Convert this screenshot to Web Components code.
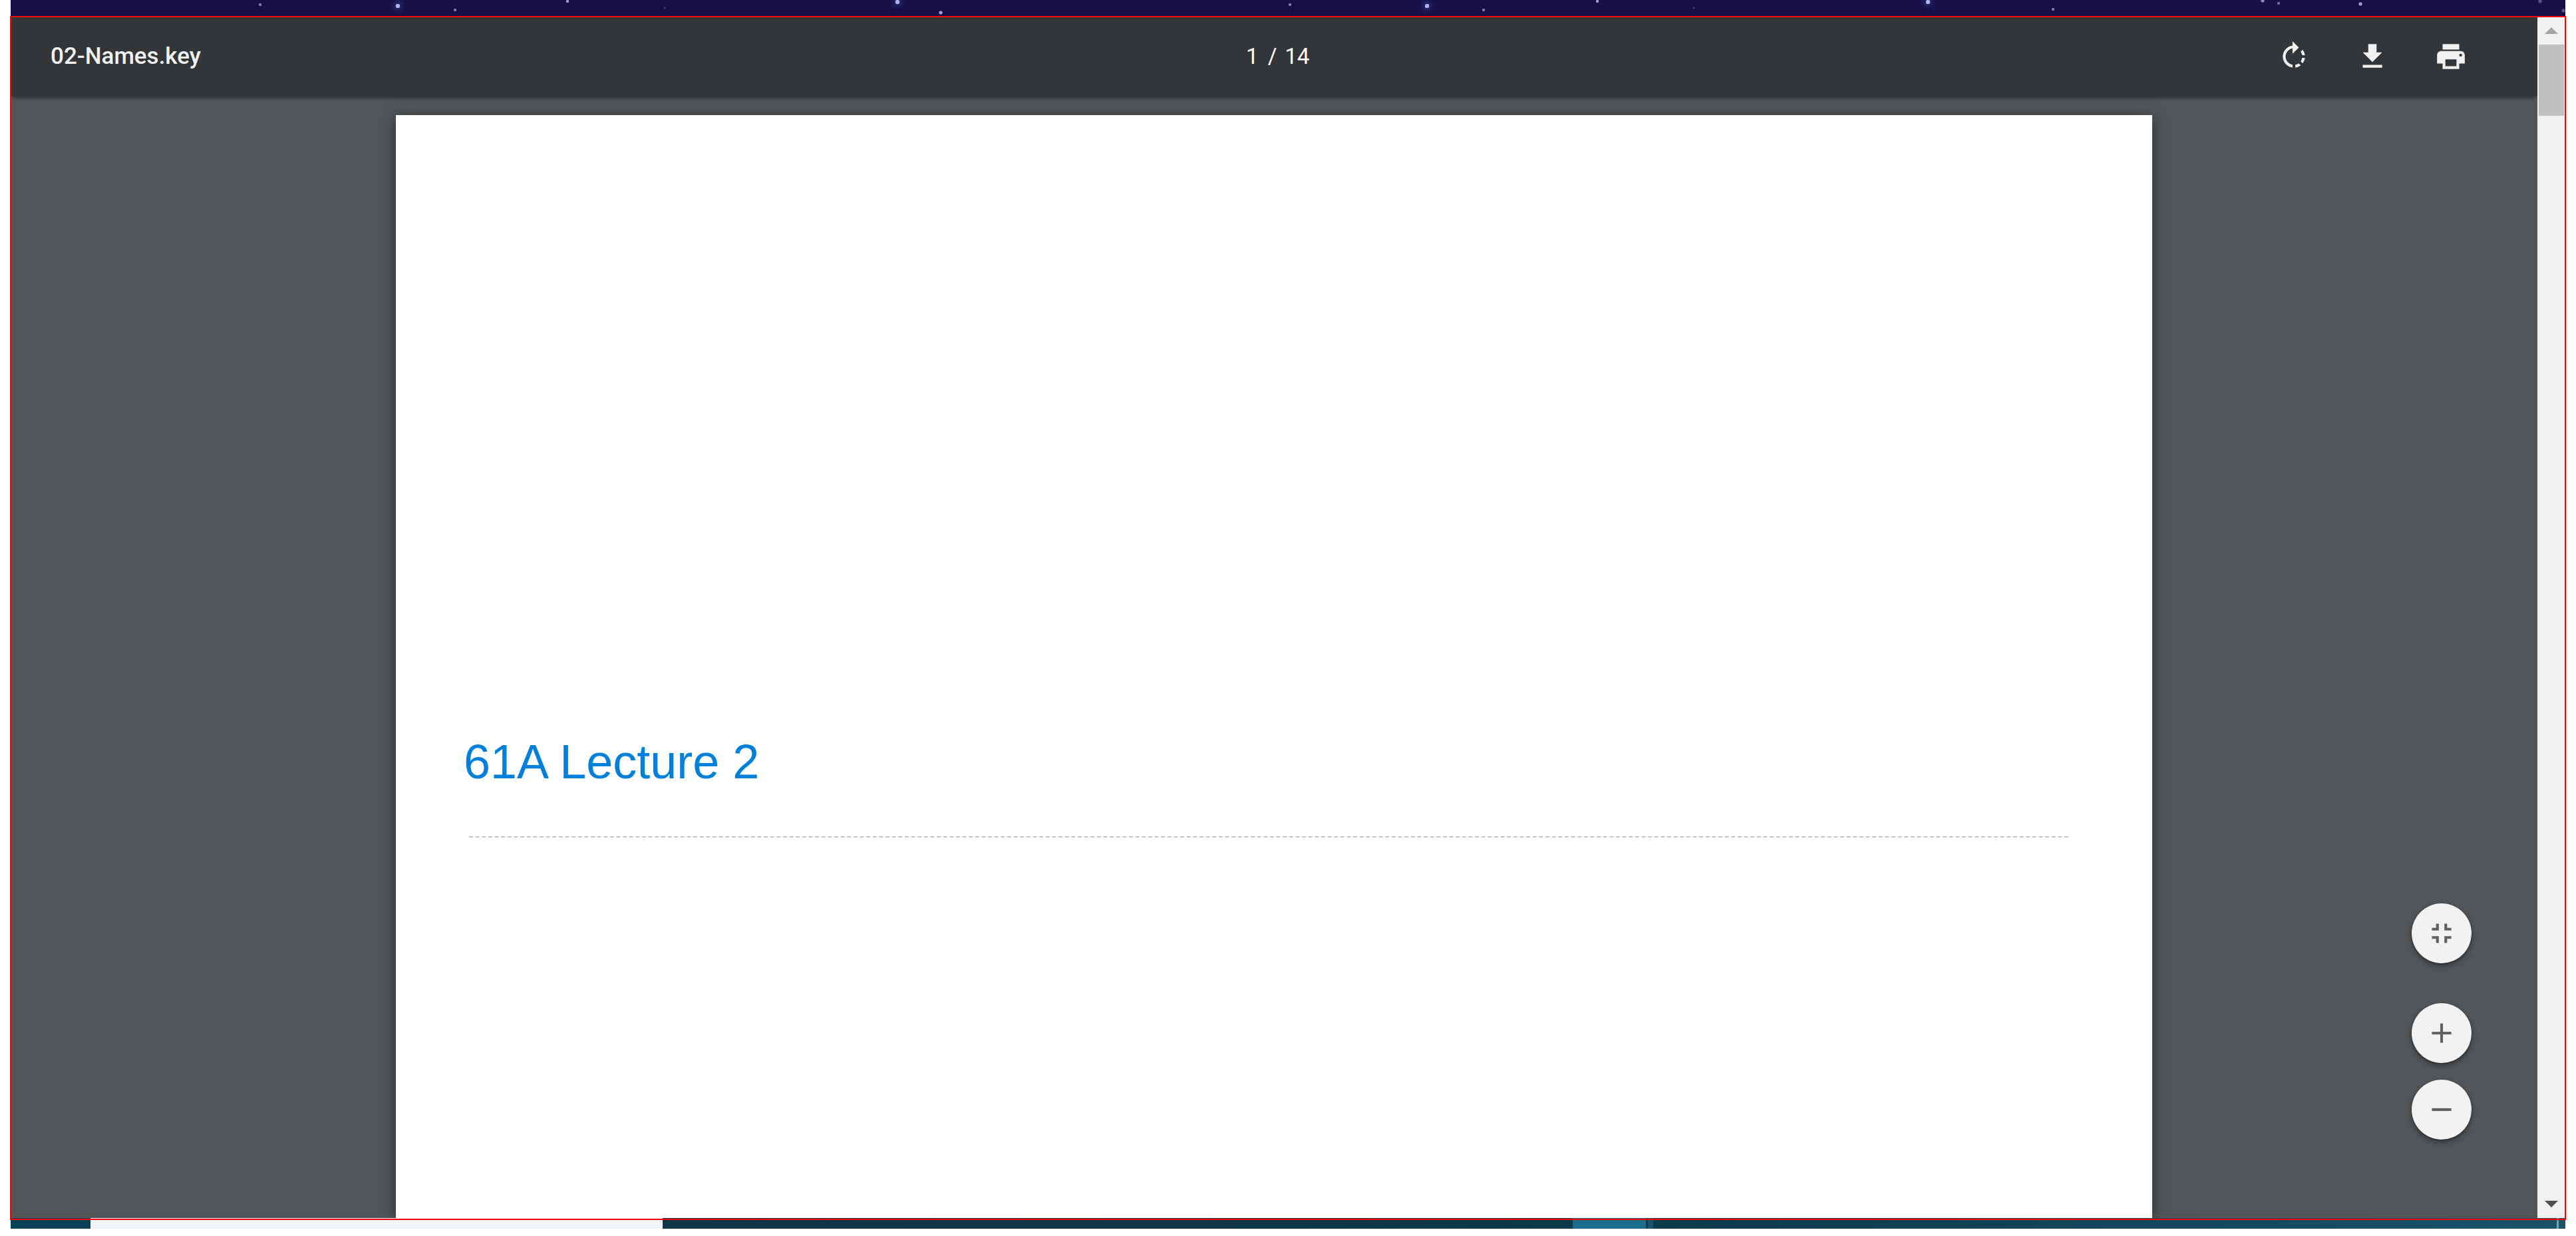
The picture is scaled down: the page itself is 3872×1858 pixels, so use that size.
<!DOCTYPE html>
<html lang="en">
<head>
<meta charset="utf-8">
<title>02-Names.key</title>
<style>
  html, body { margin: 0; height: 100%; background: #fff; }
  body { font-family: Roboto, sans-serif; }
</style>
</head>
<body>
<pdf-desktop>
  <pdf-viewer>
    <pdf-toolbar slot="toolbar" page="1" pages="14">02-Names.key</pdf-toolbar>
    <pdf-sheet>61A Lecture 2</pdf-sheet>
    <zoom-controls slot="zoom"></zoom-controls>
    <scroll-track slot="scroll"></scroll-track>
  </pdf-viewer>
</pdf-desktop>

<script>
const define = (name, html) => customElements.define(name, class extends HTMLElement {
  constructor() {
    super();
    this.attachShadow({ mode: 'open' }).innerHTML = typeof html === 'function' ? html(this) : html;
  }
});

const ICONS = {
  rotate: 'M15.55 5.55L11 1v3.07C7.06 4.56 4 7.92 4 12s3.05 7.44 7 7.93v-2.02c-2.84-.48-5-2.94-5-5.91s2.16-5.43 5-5.91V10l4.55-4.45zM19.93 11c-.17-1.39-.72-2.73-1.62-3.89l-1.42 1.42c.54.75.88 1.6 1.02 2.47h2.02zM13 17.9v2.02c1.39-.17 2.74-.71 3.9-1.61l-1.44-1.44c-.75.54-1.59.89-2.46 1.03zm3.89-2.42l1.42 1.41c.9-1.16 1.45-2.5 1.62-3.89h-2.02c-.14.87-.48 1.72-1.02 2.48z',
  download: 'M19 9h-4V3H9v6H5l7 7 7-7zM5 18v2h14v-2H5z',
  print: 'M19 8H5c-1.66 0-3 1.34-3 3v6h4v4h12v-4h4v-6c0-1.66-1.34-3-3-3zm-3 11H8v-5h8v5zm3-7c-.55 0-1-.45-1-1s.45-1 1-1 1 .45 1 1-.45 1-1 1zm-1-9H6v4h12V3z',
  fit: 'M5 16h3v3h2v-5H5v2zm3-8H5v2h5V5H8v3zm6 11h2v-3h3v-2h-5v5zm2-11V5h-2v5h5V8h-3z',
  plus: 'M19 13h-6v6h-2v-6H5v-2h6V5h2v6h6v2z',
  minus: 'M19 13H5v-2h14v2z'
};

// Icon button: flat in the toolbar, round and raised with the "fab" attribute.
define('icon-button', el => `
  <style>
    :host { display: block; }
    button { display: grid; place-items: center; padding: 0; border: 0; background: none; color: #f1f1f1; cursor: pointer; }
    svg { display: block; width: 50px; height: 50px; fill: currentColor; }
    :host([fab]) button { width: 90px; height: 90px; border-radius: 50%; background: #f2f2f2; color: #616161;
      box-shadow: 0 4px 8px rgba(0,0,0,.4), 0 1px 3px rgba(0,0,0,.3); }
  </style>
  <button type="button" aria-label="${el.getAttribute('label')}">
    <svg viewBox="0 0 24 24" aria-hidden="true"><path d="${ICONS[el.getAttribute('icon')]}"/></svg>
  </button>`);

define('night-sky', () => {
  const stars = [[391,7,4,.6],[598,9,6,.9],[684,15,4,.6],[853,2,4,.8],[999,12,3,.25],[1349,3,6,.9],[1414,19,5,.8],[1939,7,4,.6],
    [2145,9,6,.9],[2230,15,4,.6],[2401,2,4,.8],[2546,12,3,.25],[2898,3,6,.9],[3086,14,4,.6],[3401,1,5,.7],[3425,5,4,.5],
    [3548,6,5,.8],[3818,2,5,.4],[3853,16,5,.4]];
  return `
  <style>
    :host { display: block; height: 25px; background: #180f47; }
    svg { display: block; width: 100%; height: 100%; }
  </style>
  <svg aria-hidden="true">
    <defs><radialGradient id="g"><stop offset="0" stop-color="#2c4a9a" stop-opacity=".6"/><stop offset="1" stop-color="#1c2a70" stop-opacity="0"/></radialGradient></defs>
    ${stars.map(([x, y, s, o]) => `${s > 5 ? `<circle cx="${x - 16}" cy="${y}" r="13" fill="url(#g)"/>` : ''}<rect x="${x - 16 - s / 2}" y="${y - s / 2}" width="${s}" height="${s}" rx="${s / 3}" fill="#c4c3ee" opacity="${o}"/>`).join('')}
  </svg>`;
});

define('task-strip', `
  <style>
    :host { display: flex; height: 16px; background: linear-gradient(90deg, #064256, #0f3546 26%, #0c3a4b 65%, #17506a 96%, #1a5267); }
    i { display: block; }
    .lead { width: 120px; }
    .field { width: 860px; background: #f0f4f6; }
    .gap { width: 1368px; }
    .active { width: 110px; background: #1a6d8d; }
    .seam { width: 3px; }
    .next { width: 8px; background: #17566f; }
    .edge { width: 3px; margin: 0 10px 0 auto; background: #7c9fae; }
  </style>
  <i class="lead"></i><i class="field"></i><i class="gap"></i><i class="active"></i><i class="seam"></i><i class="next"></i><i class="edge"></i>`);

define('pdf-toolbar', el => `
  <style>
    :host { display: grid; grid-template-columns: 1fr auto 1fr; align-items: center; height: 120px;
      padding: 0 105px 0 60px; background: #323639; color: #f1f1f1; position: relative; z-index: 1;
      box-shadow: 0 5px 6px -3px rgba(0,0,0,.5); }
    h1 { margin: 0; font-size: 35px; line-height: 40px; font-weight: 500; }
    form { display: flex; align-items: center; margin-left: 45px; font-size: 33px; line-height: 40px; color: #fff; }
    input { width: 30px; height: 40px; padding: 0; border: 0; background: none; color: inherit; font: inherit; text-align: right; outline: 0; }
    .sep { margin: 0 12px 0 14px; }
    nav { display: flex; justify-content: flex-end; gap: 68px; }
  </style>
  <h1><slot></slot></h1>
  <form><input type="text" aria-label="Page number" value="${el.getAttribute('page')}"><span class="sep">/</span><span>${el.getAttribute('pages')}</span></form>
  <nav>
    <icon-button icon="rotate" label="Rotate clockwise"></icon-button>
    <icon-button icon="download" label="Download"></icon-button>
    <icon-button icon="print" label="Print"></icon-button>
  </nav>`);

define('pdf-sheet', `
  <style>
    :host { display: block; flex: 1; box-sizing: border-box; width: 100%; max-width: 2640px; margin: 0 auto; padding: 932px 126px 0 102px;
      background: #fff; box-shadow: 0 4px 20px rgba(0,0,0,.5); }
    h2 { margin: 0; font: 400 72px/80px "Liberation Sans", Arial, sans-serif; color: #0080db; }
    svg { display: block; width: calc(100% - 8px); height: 2px; margin: 72px 0 0 8px; }
  </style>
  <h2><slot></slot></h2>
  <svg aria-hidden="true"><line x1="0" y1="1" x2="100%" y2="1" stroke="#c6c6c6" stroke-width="2" pathLength="1997" stroke-dasharray="5 3"/></svg>`);

define('zoom-controls', `
  <style>
    :host { display: flex; flex-direction: column; gap: 25px; }
    .fit { margin-bottom: 35px; }
  </style>
  <icon-button class="fit" fab icon="fit" label="Fit to page"></icon-button>
  <icon-button fab icon="plus" label="Zoom in"></icon-button>
  <icon-button fab icon="minus" label="Zoom out"></icon-button>`);

define('scroll-track', `
  <style>
    :host { display: flex; flex-direction: column; width: 42px; background: #f1f1f1; }
    button { display: grid; place-items: center; height: 42px; padding: 0; border: 0; background: none; }
    svg { display: block; width: 20px; height: 10px; }
    .thumb { height: 107px; margin: 0 2px; background: #c1c1c1; }
    .rest { flex: 1; }
  </style>
  <button type="button" aria-label="Scroll up"><svg viewBox="0 0 20 10"><path d="M0 10L10 0l10 10z" fill="#a3a3a3"/></svg></button>
  <div class="thumb"></div><div class="rest"></div>
  <button type="button" aria-label="Scroll down"><svg viewBox="0 0 20 10"><path d="M0 0h20L10 10z" fill="#505050"/></svg></button>`);

define('pdf-viewer', `
  <style>
    :host { display: flex; position: relative; min-height: 0; }
    :host::after { content: ""; position: absolute; inset: -1px -1px -3px -1px; border: 2px solid #f00; pointer-events: none; z-index: 3; }
    .main { flex: 1; min-width: 0; display: flex; flex-direction: column; position: relative; overflow: hidden; background: #525659; }
    .pages { flex: 1; display: flex; flex-direction: column; padding-top: 28px; min-height: 0; }
    .zoom { position: absolute; right: 99px; bottom: 118px; z-index: 2; }
    ::slotted(scroll-track) { flex: none; }
  </style>
  <div class="main">
    <slot name="toolbar"></slot>
    <div class="pages"><slot></slot></div>
    <div class="zoom"><slot name="zoom"></slot></div>
  </div>
  <slot name="scroll"></slot>`);

define('pdf-desktop', `
  <style>
    :host { display: flex; flex-direction: column; box-sizing: border-box; height: 100vh; padding: 0 16px 11px; background: #fff; }
    ::slotted(pdf-viewer) { flex: 1; }
    night-sky, task-strip { flex: none; }
  </style>
  <night-sky></night-sky>
  <slot></slot>
  <task-strip></task-strip>`);
</script>
</body>
</html>
